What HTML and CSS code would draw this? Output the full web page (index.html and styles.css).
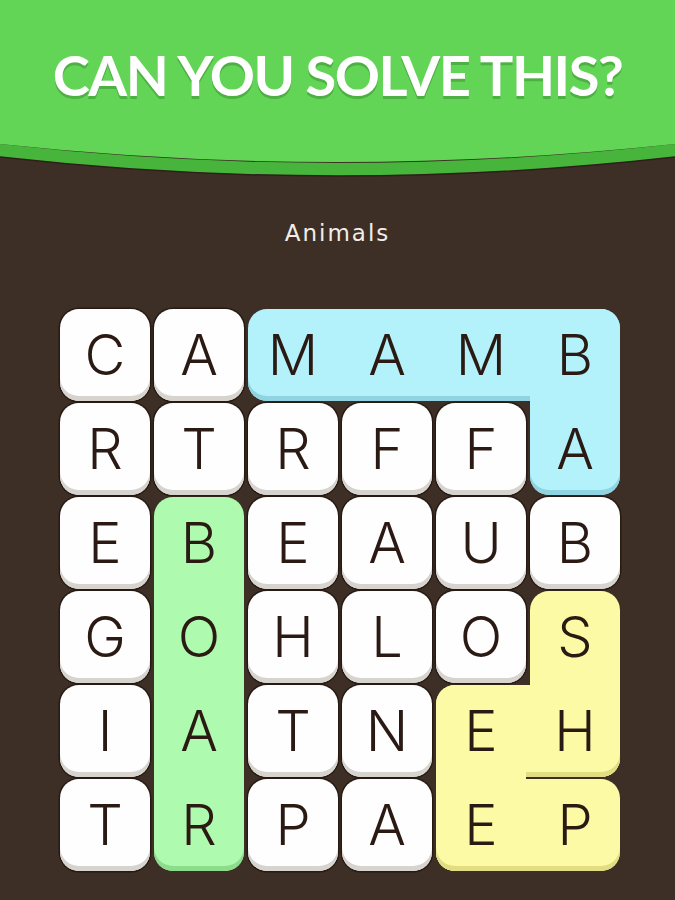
FILE: index.html
```html
<!DOCTYPE html>
<html lang="en">
<head>
<meta charset="utf-8">
<title>Can you solve this?</title>
<link rel="stylesheet" href="styles.css">
</head>
<body>
<header class="banner">
  <h1 class="title">CAN YOU SOLVE THIS?</h1>
</header>
<svg class="banner-curve" viewBox="0 0 675 36" width="675" height="36" aria-hidden="true">
  <path d="M0 0 Q337.5 38 675 0 L675 13 Q337.5 51 0 13 Z" fill="#47b53b"/>
  <path d="M0 13 Q337.5 51 675 13" fill="none" stroke="#2c2019" stroke-width="1.5"/>
  <path d="M0 0 H675 Q337.5 36 0 0 Z" fill="#62d557"/>
</svg>
<p class="category">Animals</p>
<main class="board">
  <div class="band blue" style="grid-column:3/7;grid-row:1/2"></div>
  <div class="band blue" style="grid-column:6/7;grid-row:1/3"></div>
  <div class="band green" style="grid-column:2/3;grid-row:3/7"></div>
  <div class="band yellow" style="grid-column:6/7;grid-row:4/6"></div>
  <div class="band yellow" style="grid-column:5/7;grid-row:5/6"></div>
  <div class="band yellow" style="grid-column:5/6;grid-row:5/7"></div>
  <div class="band yellow" style="grid-column:5/7;grid-row:6/7"></div>

  <div class="cell tile" style="grid-area:1/1">C</div>
  <div class="cell tile" style="grid-area:1/2">A</div>
  <div class="cell" style="grid-area:1/3">M</div>
  <div class="cell" style="grid-area:1/4">A</div>
  <div class="cell" style="grid-area:1/5">M</div>
  <div class="cell" style="grid-area:1/6">B</div>

  <div class="cell tile" style="grid-area:2/1">R</div>
  <div class="cell tile" style="grid-area:2/2">T</div>
  <div class="cell tile" style="grid-area:2/3">R</div>
  <div class="cell tile" style="grid-area:2/4">F</div>
  <div class="cell tile" style="grid-area:2/5">F</div>
  <div class="cell" style="grid-area:2/6">A</div>

  <div class="cell tile" style="grid-area:3/1">E</div>
  <div class="cell" style="grid-area:3/2">B</div>
  <div class="cell tile" style="grid-area:3/3">E</div>
  <div class="cell tile" style="grid-area:3/4">A</div>
  <div class="cell tile" style="grid-area:3/5">U</div>
  <div class="cell tile" style="grid-area:3/6">B</div>

  <div class="cell tile" style="grid-area:4/1">G</div>
  <div class="cell" style="grid-area:4/2">O</div>
  <div class="cell tile" style="grid-area:4/3">H</div>
  <div class="cell tile" style="grid-area:4/4">L</div>
  <div class="cell tile" style="grid-area:4/5">O</div>
  <div class="cell" style="grid-area:4/6">S</div>

  <div class="cell tile" style="grid-area:5/1">I</div>
  <div class="cell" style="grid-area:5/2">A</div>
  <div class="cell tile" style="grid-area:5/3">T</div>
  <div class="cell tile" style="grid-area:5/4">N</div>
  <div class="cell" style="grid-area:5/5">E</div>
  <div class="cell" style="grid-area:5/6">H</div>

  <div class="cell tile" style="grid-area:6/1">T</div>
  <div class="cell" style="grid-area:6/2">R</div>
  <div class="cell tile" style="grid-area:6/3">P</div>
  <div class="cell tile" style="grid-area:6/4">A</div>
  <div class="cell" style="grid-area:6/5">E</div>
  <div class="cell" style="grid-area:6/6">P</div>
</main>
</body>
</html>
```

FILE: styles.css
```css
html, body {
  margin: 0;
  padding: 0;
}

body {
  width: 675px;
  height: 900px;
  overflow: hidden;
  background: #3d2f25;
}

.banner {
  height: 144px;
  background: #62d557;
  display: flex;
  align-items: center;
  justify-content: center;
  padding-top: 6px;
  box-sizing: border-box;
}

.title {
  margin: 0;
  font-family: "Lato", "Liberation Sans", sans-serif;
  font-weight: 700;
  font-size: 56px;
  line-height: 1;
  letter-spacing: -1.5px;
  color: #ffffff;
  text-shadow: 0 3px 0 rgba(40, 110, 30, 0.35);
}

.banner-curve {
  display: block;
}

.category {
  margin: 39px 0 0;
  text-align: center;
  font-family: "DejaVu Sans", sans-serif;
  font-size: 23px;
  line-height: 28px;
  letter-spacing: 2px;
  color: #f2ede8;
}

.board {
  margin: 62px 0 0 60px;
  display: grid;
  grid-template-columns: repeat(6, 90px);
  grid-template-rows: repeat(6, 92px);
  column-gap: 4px;
  row-gap: 2px;
}

.band,
.tile {
  border-radius: 19px;
  box-shadow: inset 0 -5px 0 var(--lip);
}

.tile {
  background: #fefefe;
  --lip: #d7d3cf;
  box-shadow: inset 0 -5px 0 var(--lip), 0 0 0 1.5px #261a13;
}

.blue {
  background: #b4f2fb;
  --lip: #8fd4e0;
}

.green {
  background: #aefaae;
  --lip: #8cdc8c;
}

.yellow {
  background: #fdfaa6;
  --lip: #e2dd82;
}

.cell {
  display: flex;
  align-items: center;
  justify-content: center;
  font-family: "Inter", "Lato", sans-serif;
  font-weight: 300;
  font-size: 56px;
  line-height: 1;
  color: #2a1a13;
}
```
